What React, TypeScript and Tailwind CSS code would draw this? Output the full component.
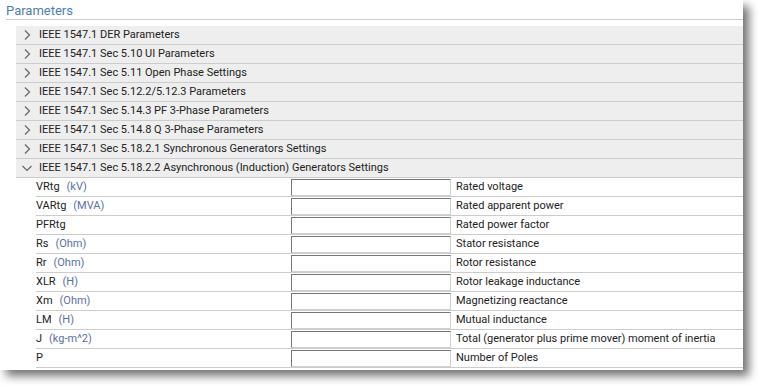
import React from "react";

const sections = [
  "IEEE 1547.1 DER Parameters",
  "IEEE 1547.1 Sec 5.10 UI Parameters",
  "IEEE 1547.1 Sec 5.11 Open Phase Settings",
  "IEEE 1547.1 Sec 5.12.2/5.12.3 Parameters",
  "IEEE 1547.1 Sec 5.14.3 PF 3-Phase Parameters",
  "IEEE 1547.1 Sec 5.14.8 Q 3-Phase Parameters",
  "IEEE 1547.1 Sec 5.18.2.1 Synchronous Generators Settings",
];

const params: { name: string; unit?: string; desc: string }[] = [
  { name: "VRtg", unit: "(kV)", desc: "Rated voltage" },
  { name: "VARtg", unit: "(MVA)", desc: "Rated apparent power" },
  { name: "PFRtg", desc: "Rated power factor" },
  { name: "Rs", unit: "(Ohm)", desc: "Stator resistance" },
  { name: "Rr", unit: "(Ohm)", desc: "Rotor resistance" },
  { name: "XLR", unit: "(H)", desc: "Rotor leakage inductance" },
  { name: "Xm", unit: "(Ohm)", desc: "Magnetizing reactance" },
  { name: "LM", unit: "(H)", desc: "Mutual inductance" },
  { name: "J", unit: "(kg-m^2)", desc: "Total (generator plus prime mover) moment of inertia" },
  { name: "P", desc: "Number of Poles" },
];

const Chevron = ({ open }: { open?: boolean }) => (
  <svg width="12" height="12" viewBox="0 0 12 12" className="shrink-0">
    {open ? (
      <polyline points="1.5,4 6,8.5 10.5,4" fill="none" stroke="#666" strokeWidth="1.2" />
    ) : (
      <polyline points="4,1.5 8.5,6 4,10.5" fill="none" stroke="#666" strokeWidth="1.2" />
    )}
  </svg>
);

export default function App() {
  return (
    <div
      className="w-[758px] h-[386px] bg-white overflow-hidden"
      style={{ fontFamily: "Roboto, 'Liberation Sans', sans-serif" }}
    >
      <div className="w-[743px] bg-white pb-[2px] shadow-[6px_6px_9px_rgba(0,0,0,0.55)]">
        <div className="pl-[6px]">
          <div className="h-[20px] border-b border-[#cccccc] text-[13px] leading-[21px] text-[#4f7db3]">
            Parameters
          </div>
        </div>
        <div className="pl-[16px] pt-[6px] text-[11px] text-[#222222]">
          {sections.map((s) => (
            <div key={s} className="h-[19px] flex items-center bg-[#eeeeee] border-b border-[#cccccc]">
              <div className="w-[23px] pl-[5px] flex items-center">
                <Chevron />
              </div>
              <span>{s}</span>
            </div>
          ))}
          <div className="h-[19px] flex items-center bg-[#eeeeee] border-b border-[#cccccc]">
            <div className="w-[23px] pl-[5px] flex items-center">
              <Chevron open />
            </div>
            <span>IEEE 1547.1 Sec 5.18.2.2 Asynchronous (Induction) Generators Settings</span>
          </div>
          <div className="pl-[20px]">
            {params.map((p) => (
              <div key={p.name} className="h-[19px] flex items-center border-b border-[#cccccc]">
                <div className="w-[255px] flex gap-[7px]">
                  <span>{p.name}</span>
                  {p.unit && <span className="text-[#5b6fa6]">{p.unit}</span>}
                </div>
                <div className="w-[160px] h-[17px] border border-t-[#767676] border-l-[#767676] border-r-[#d0d0d0] border-b-[#d0d0d0] bg-white" />
                <span className="ml-[5px]">{p.desc}</span>
              </div>
            ))}
          </div>
        </div>
      </div>
    </div>
  );
}
